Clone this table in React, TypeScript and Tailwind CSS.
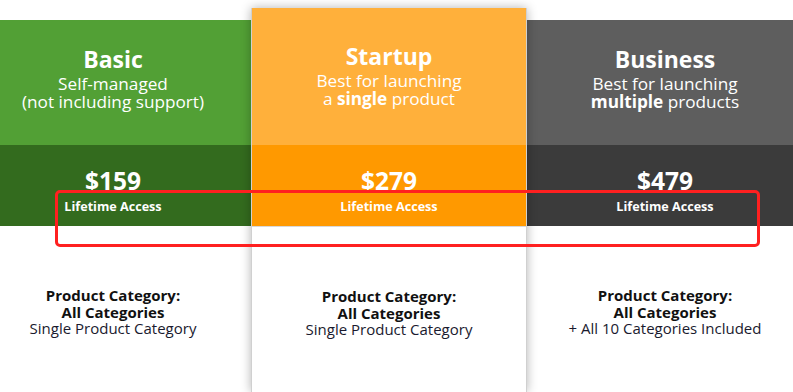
const plans = [
  {
    name: "Basic",
    sub: [<>Self-managed</>, <>(not including support)</>],
    price: "$159",
    header: "bg-[#52a035]",
    band: "bg-[#336b1e]",
    extra: "Single Product Category",
    featured: false,
  },
  {
    name: "Startup",
    sub: [<>Best for launching</>, <>a <b>single</b> product</>],
    price: "$279",
    header: "bg-[#ffb03b]",
    band: "bg-[#ff9900]",
    extra: "Single Product Category",
    featured: true,
  },
  {
    name: "Business",
    sub: [<>Best for launching</>, <><b>multiple</b> products</>],
    price: "$479",
    header: "bg-[#5e5e5e]",
    band: "bg-[#3b3b3b]",
    extra: "+ All 10 Categories Included",
    featured: false,
  },
];

export default function App() {
  return (
    <div className="relative h-[392px] w-[793px] overflow-hidden bg-white font-['Open_Sans',sans-serif]">
      <div className="ml-[-25px] flex">
        {plans.map((p) => (
          <div
            key={p.name}
            className={
              p.featured
                ? "relative z-10 mt-[8px] flex h-[384px] w-[276px] shrink-0 flex-col border-x border-[#d0d0d0] shadow-[0_0_10px_rgba(0,0,0,0.3)]"
                : "mt-[20px] flex h-[372px] w-[276px] shrink-0 flex-col"
            }
          >
            <div
              className={
                p.header +
                " flex flex-col items-center text-white " +
                (p.featured ? "h-[137px] pt-[32px]" : "h-[125px] pt-[23px]")
              }
            >
              <div className="text-[23px] font-bold leading-[32px]">{p.name}</div>
              {p.sub.map((s, i) => (
                <div key={i} className="text-[17.2px] leading-[18px]">
                  {s}
                </div>
              ))}
            </div>
            <div className={p.band + " flex h-[81px] flex-col items-center pt-[22px] text-white"}>
              <div className="text-[24.5px] font-bold leading-[28px]">{p.price}</div>
              <div className="mt-[3px] text-[12.6px] font-bold leading-[18px]">Lifetime Access</div>
            </div>
            <div
              className={
                "flex flex-1 flex-col items-center bg-white pt-[61px] text-[15px] leading-[16.5px] " +
                (p.featured ? "border-t border-[#d8d8d8]" : "")
              }
            >
              <div className="font-bold text-[#111]">Product Category:</div>
              <div className="font-bold text-[#111]">All Categories</div>
              <div className="text-[#1a1a2e]">{p.extra}</div>
            </div>
          </div>
        ))}
      </div>
      <div className="absolute left-[55px] top-[190px] z-20 h-[57px] w-[705px] rounded-[5px] border-[3px] border-[#ff2020]" />
    </div>
  );
}
